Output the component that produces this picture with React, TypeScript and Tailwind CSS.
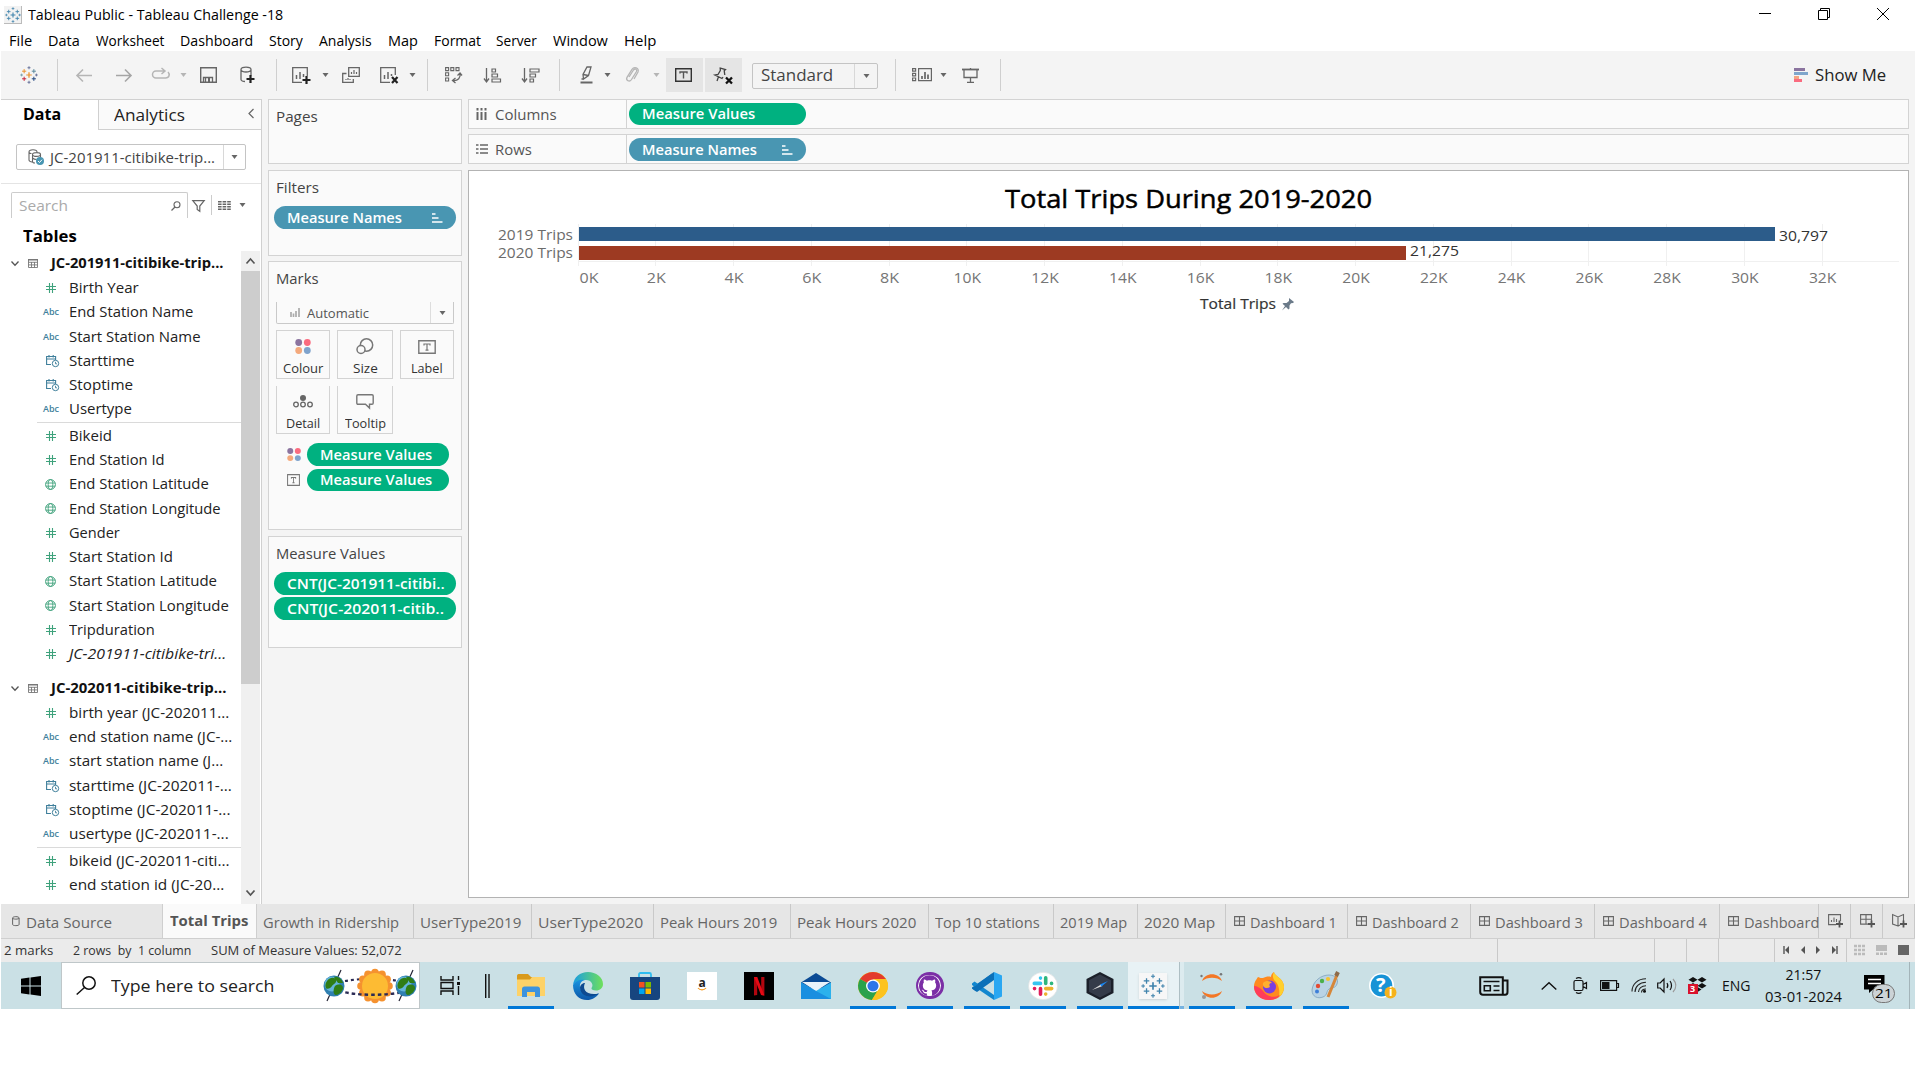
import React, { useLayoutEffect, useRef, useState } from "react";
import { SiGithub } from "react-icons/si";

/* Label stretched horizontally so that it fills exactly `w` pixels. */
function Fit({ w, className = "", children }: { w: number; className?: string; children: string }) {
  const ref = useRef<HTMLSpanElement>(null);
  const [k, setK] = useState(1);
  useLayoutEffect(() => {
    const n = ref.current;
    if (n && n.offsetWidth) setK(w / n.offsetWidth);
  }, [w, children]);
  return (
    <span className={"block shrink-0 whitespace-pre " + className} style={{ width: w }}>
      <span ref={ref} className="inline-block origin-left" style={{ transform: `scaleX(${k})` }}>
        {children}
      </span>
    </span>
  );
}

type SvgProps = { w: number; h: number; children: React.ReactNode; className?: string };
function Svg({ w, h, children, className = "" }: SvgProps) {
  return (
    <svg width={w} height={h} viewBox={`0 0 ${w} ${h}`} fill="none" className={"block shrink-0 overflow-visible " + className}>
      {children}
    </svg>
  );
}

const Caret = ({ c = "#666" }: { c?: string }) => (
  <Svg w={7} h={4}>
    <path d="M0.5 0h6L3.5 4z" fill={c} />
  </Svg>
);

const plus = (x: number, y: number, r: number) => `M${x - r} ${y}h${r * 2}M${x} ${y - r}v${r * 2}`;

function TableauMark({ size, mono = false }: { size: number; mono?: boolean }) {
  const c = mono ? "#3f83ac" : "";
  return (
    <svg width={size} height={size} viewBox="0 0 26 26" fill="none" className="block shrink-0">
      <path d={plus(13, 13, 4)} stroke={c || "#eb912c"} strokeWidth="1.8" />
      <path d={plus(6, 7.5, 3)} stroke={c || "#eb912c"} strokeWidth="1.4" />
      <path d={plus(20, 7.5, 3)} stroke={c || "#59879b"} strokeWidth="1.4" />
      <path d={plus(6, 18.5, 3)} stroke={c || "#c72035"} strokeWidth="1.4" />
      <path d={plus(20, 18.5, 3)} stroke={c || "#1f447e"} strokeWidth="1.4" />
      <path d={plus(13, 2.5, 2.2)} stroke={c || "#5b6591"} strokeWidth="1.2" />
      <path d={plus(13, 23.5, 2.2)} stroke={c || "#5b6591"} strokeWidth="1.2" />
      <path d={plus(2.3, 13, 2)} stroke={c || "#7199a6"} strokeWidth="1.2" />
      <path d={plus(23.7, 13, 2)} stroke={c || "#5b6591"} strokeWidth="1.2" />
    </svg>
  );
}

function SortMark() {
  return (
    <Svg w={11} h={10}>
      <path d="M0 1h3.5M0 5h6.5M0 9h10.5" stroke="#fff" strokeWidth="1.6" />
    </Svg>
  );
}

/* ---------- window chrome ---------- */

const menus: [string, number, string][] = [
  ["File", 23, "w-[39px]"],
  ["Data", 32, "w-[48px]"],
  ["Worksheet", 68, "w-[84px]"],
  ["Dashboard", 73, "w-[89px]"],
  ["Story", 34, "w-[50px]"],
  ["Analysis", 53, "w-[69px]"],
  ["Map", 30, "w-[46px]"],
  ["Format", 47, "w-[62px]"],
  ["Server", 41, "w-[57px]"],
  ["Window", 55, "w-[71px]"],
  ["Help", 32, "w-[40px]"],
];

function TitleBar() {
  return (
    <div className="flex h-7 items-center pl-1 text-black">
      <div className="mt-0.5 flex h-[18px] w-[18px] items-center justify-center border-r border-b border-[#bbb] bg-[#f2f2f2]">
        <TableauMark size={16} mono />
      </div>
      <Fit w={255} className="ml-[6px] mt-px text-[14.5px] leading-7">Tableau Public - Tableau Challenge -18</Fit>
      <div className="mr-[26px] ml-auto flex items-center gap-[47px]">
        <Svg w={12} h={12}><path d="M0 5.5h12" stroke="#000" /></Svg>
        <Svg w={12} h={12}><path d="M.5 2.5h9v9h-9zM2.5 2.5v-2h9v9h-2" stroke="#000" /></Svg>
        <Svg w={12} h={12}><path d="M0 0L12 12M12 0L0 12" stroke="#000" /></Svg>
      </div>
    </div>
  );
}

function MenuBar() {
  return (
    <div className="flex h-[23px] pl-[9px] text-black">
      {menus.map(([t, w, cls]) => (
        <div key={t} className={"shrink-0 " + cls}>
          <Fit w={w} className="text-[14px] leading-[25px]">{t}</Fit>
        </div>
      ))}
    </div>
  );
}

const Sep = () => <div className="h-8 w-px shrink-0 bg-[#cfcfcf]" />;

function Cell({ cls, children }: { cls: string; children: React.ReactNode }) {
  return <div className={"flex h-[34px] shrink-0 items-center justify-center " + cls}>{children}</div>;
}

const g = "#666";
const lg = "#b5b5b5";

function Toolbar() {
  return (
    <div className="ml-px flex h-12 items-center bg-[#f4f4f4]">
      <Cell cls="w-[55px]"><TableauMark size={18} /></Cell>
      <div className="ml-px"><Sep /></div>
      <Cell cls="ml-[6px] w-10"><Svg w={16} h={13}><path d="M16 6.5H1M7 .5L1 6.500l6 6" stroke={lg} strokeWidth="1.6" /></Svg></Cell>
      <Cell cls="w-[39px]"><Svg w={16} h={13}><path d="M0 6.500h15M9 .5l6 6-6 6" stroke="#a5a5a5" strokeWidth="1.6" /></Svg></Cell>
      <Cell cls="w-9 pb-1"><Svg w={18} h={11}><path d="M12 3H4a3.300 3.300 0 000 7h9.500c4 0 4.500-4 2.500-6M9.500 0l3.500 3-3.500 3" stroke={lg} strokeWidth="1.5" /></Svg></Cell>
      <Cell cls="w-[9px]"><Caret c={lg} /></Cell>
      <Cell cls="ml-[2px] w-[36px]"><Svg w={17} h={16}><path d="M.7.7h15.600v14.600H.7z" stroke={g} strokeWidth="1.400" /><path d="M3.500 15v-4.500h9V15M5.500 11v4" stroke={g} strokeWidth="1.300" /><path d="M8 11h2v4H8z" fill={g} /></Svg></Cell>
      <Cell cls="w-[42px]"><Svg w={15} h={18}><path d="M1 3.500v10c0 1 2 2 4 2M1 3.500C1 .2 11 .2 11 3.500S1 6.800 1 3.500M11 3.500v6" stroke={g} strokeWidth="1.300" /><path d={plus(10.5, 13, 4)} stroke="#222" strokeWidth="2.200" /></Svg></Cell>
      <div className="ml-[8px]"><Sep /></div>
      <Cell cls="ml-[3px] w-[42px]"><Svg w={19} h={17}><path d="M15.300 9V.7H.7v14.600H10" stroke={g} strokeWidth="1.300" /><path d="M4.500 12V8M8 12V5M11.500 10V7" stroke={g} strokeWidth="1.500" /><path d={plus(14.5, 13, 4)} stroke="#222" strokeWidth="2.200" /></Svg></Cell>
      <Cell cls="-ml-px w-[9px]"><Caret /></Cell>
      <Cell cls="ml-px w-[40px]"><Svg w={18} h={16}><path d="M6.700.7h10.600v8.600H6.700zM4.500 6.500H.7v8.800h10.600V12" stroke={g} strokeWidth="1.300" /><path d="M9.500 7V5M12 7V3M14.500 7V5M4 13v-1M6 13v-2M8 13v-1" stroke={g} strokeWidth="1.200" /></Svg></Cell>
      <Cell cls="-ml-px w-[38px]"><Svg w={19} h={17}><path d="M15.300 8V.7H.7v14.600H10" stroke={g} strokeWidth="1.300" /><path d="M4.500 12V8M8 12V5M11.500 9V7" stroke={g} strokeWidth="1.500" /><path d="M12 10l5.500 6M17.500 10L12 16" stroke="#222" strokeWidth="2.200" /></Svg></Cell>
      <Cell cls="w-[9px]"><Caret /></Cell>
      <div className="ml-[10px]"><Sep /></div>
      <Cell cls="ml-[5px] w-[40px]"><Svg w={17} h={16}><path d="M.6.6h3v3h-3zM5.800.6h3v3h-3zM11 .6h3v3h-3zM.6 5.800h3v3h-3zM.6 11h3v3h-3z" stroke={g} strokeWidth="1.100" /><path d="M15 6.500c1 4-2 7.500-7 7M12.500 8.500L15 6l2 2.500M10.500 11L7.500 13.500l3 2.500" stroke={g} strokeWidth="1.300" /></Svg></Cell>
      <Cell cls="w-[38px]"><Svg w={17} h={15}><path d="M2.500 0v13M0 10.500L2.500 14 5 10.500" stroke={g} strokeWidth="1.300" /><path d="M8 1h3.500v3H8zM8 6h5.500v3H8zM8 11h8.500v3H8z" stroke={g} strokeWidth="1.200" /></Svg></Cell>
      <Cell cls="w-[39px]"><Svg w={17} h={15}><path d="M2.500 0v13M0 10.500L2.500 14 5 10.500" stroke={g} strokeWidth="1.300" /><path d="M8 1h9v3H8zM8 6h5.500v3H8zM8 11h3.500v3H8z" stroke={g} strokeWidth="1.200" /></Svg></Cell>
      <div className="ml-[9px]"><Sep /></div>
      <Cell cls="ml-[6px] w-[40px]"><Svg w={13} h={18}><path d="M7 1h4L8.500 9.500 3.500 13l-.5-4.500zM3 8.500l5.500 1M3.500 13L1.500 13" stroke={g} strokeWidth="1.300" /><path d="M.5 16.500h12" stroke={g} strokeWidth="2" /></Svg></Cell>
      <Cell cls="-ml-[3px] w-[9px]"><Caret /></Cell>
      <Cell cls="w-[40px]"><Svg w={14} h={16}><path d="M4 10l4.500-7c1.500-2 4-.5 3 1.500l-5 8c-2 3-6 1-4.500-2.200l5-8C9-.5 14.500.5 13 5l-4 7" stroke={lg} strokeWidth="1.300" /></Svg></Cell>
      <Cell cls="w-[9px]"><Caret c={lg} /></Cell>
      <Cell cls="ml-[5px] w-[37px] bg-[#e5e5e5]"><Svg w={17} h={14} className="-ml-[2px]"><path d="M.7.7h15.600v12.600H.7z" stroke="#333" strokeWidth="1.400" /><path d="M5 5.500V4h7v1.500M8.500 4v6.500" stroke="#555" strokeWidth="1.400" /></Svg></Cell>
      <Cell cls="ml-0.5 w-[37px] bg-[#e5e5e5]">
        <Svg w={19} h={17}><path d="M5.500.8l6 1.700-1.300 1.200.6 4.300M6.300 1v2.500L4 7.500 1 8l7 3.500 1-1.500M4.500 9.800L3 14" stroke="#444" strokeWidth="1.300" /><path d="M12 10.500l6 6M18 10.500l-6 6" stroke="#111" strokeWidth="2.300" /></Svg>
      </Cell>
      <div className="mt-px ml-[10px] flex h-[26px] w-[126px] rounded-[2px] border border-[#c4c4c4]">
        <Fit w={72} className="ml-2 text-[16px] leading-[23px] text-[#444]">Standard</Fit>
        <div className="ml-auto flex w-[23px] items-center justify-center border-l border-[#d8d8d8]"><Caret /></div>
      </div>
      <div className="ml-[17px]"><Sep /></div>
      <Cell cls="ml-[5px] w-[42px]"><Svg w={20} h={14}><path d="M.6.6h3v2.600h-3zM.6 5.300h3v2.600h-3zM.6 10h3v2.600h-3zM6.600.6h12.800v12H6.600z" stroke={g} strokeWidth="1.200" /><path d="M10 11V8M13 11V4M16 11V6.500" stroke={g} strokeWidth="1.700" /></Svg></Cell>
      <Cell cls="-ml-[4px] w-[9px]"><Caret /></Cell>
      <Cell cls="ml-[2px] w-[40px]"><Svg w={17} h={15}><path d="M0 1.500h17" stroke={g} strokeWidth="1.800" /><path d="M2 2v7.500h13V2M8.500 0v2M8.500 9.500V14M5 14.300h7" stroke={g} strokeWidth="1.300" /></Svg></Cell>
      <div className="ml-[10px]"><Sep /></div>
      <div className="mr-[29px] ml-auto flex items-center gap-[7px]">
        <Svg w={14} h={14}><path d="M0 0h11v3H0z" fill="#8b749f" /><path d="M0 4h14v3H0z" fill="#7fa6cc" /><path d="M0 8h5v3H0z" fill="#f4a582" /><path d="M0 11h8v3H0z" fill="#fa6b7f" /></Svg>
        <Fit w={71} className="-mt-px text-[16px] leading-6 text-[#222]">Show Me</Fit>
      </div>
    </div>
  );
}

/* ---------- data pane ---------- */

type Kind = "num" | "abc" | "date" | "geo";
type Field = [Kind, string, number, boolean?];

const t1dims: Field[] = [
  ["num", "Birth Year", 69], ["abc", "End Station Name", 123], ["abc", "Start Station Name", 131],
  ["date", "Starttime", 65], ["date", "Stoptime", 63], ["abc", "Usertype", 62],
];
const t1meas: Field[] = [
  ["num", "Bikeid", 42], ["num", "End Station Id", 95], ["geo", "End Station Latitude", 139],
  ["geo", "End Station Longitude", 151], ["num", "Gender", 50], ["num", "Start Station Id", 103],
  ["geo", "Start Station Latitude", 147], ["geo", "Start Station Longitude", 159],
  ["num", "Tripduration", 85], ["num", "JC-201911-citibike-tri...", 156, true],
];
const t2dims: Field[] = [
  ["num", "birth year (JC-202011...", 159], ["abc", "end station name (JC-...", 162], ["abc", "start station name (J...", 153],
  ["date", "starttime (JC-202011-...", 162], ["date", "stoptime (JC-202011-...", 160], ["abc", "usertype (JC-202011-...", 159],
];
const t2meas: Field[] = [["num", "bikeid (JC-202011-citi...", 160], ["num", "end station id (JC-20...", 154]];

function KindIcon({ kind }: { kind: Kind }) {
  if (kind === "num") return <Svg w={10} h={10}><path d="M0 3.500h10M0 6.500h10M3.500 0v10M6.500 0v10" stroke="#3fa27c" strokeWidth="1.100" /></Svg>;
  if (kind === "abc") return <Fit w={16} className="text-[9px] leading-[12px] font-semibold text-[#3f7f9b]">Abc</Fit>;
  if (kind === "geo")
    return (
      <Svg w={11} h={11} className="mr-px">
        <circle cx="5.500" cy="5.500" r="4.900" stroke="#3fa27c" />
        <path d="M.9 4h9.200M.9 7.200h9.200" stroke="#3fa27c" strokeWidth=".9" />
        <ellipse cx="5.500" cy="5.500" rx="2.300" ry="4.900" stroke="#3fa27c" strokeWidth=".9" />
      </Svg>
    );
  return (
    <Svg w={13} h={12} className="ml-[3px]">
      <path d="M5 9.500H.6v-8h9V5M.6 4h9M3 0v2.500M7.200 0v2.500" stroke="#3f7f9b" strokeWidth="1.100" />
      <circle cx="9.500" cy="8.500" r="3.200" stroke="#3f7f9b" fill="#fff" />
      <path d="M9.500 6.800v2h1.500" stroke="#3f7f9b" strokeWidth=".9" />
    </Svg>
  );
}

function Fields({ list }: { list: Field[] }) {
  return (
    <>
      {list.map(([k, t, w, it]) => (
        <div key={t} className="flex h-[24.3px] items-center">
          <div className="ml-9 flex w-7 justify-center"><KindIcon kind={k} /></div>
          <Fit w={w + 1} className={"ml-1 text-[14px] leading-6 text-[#222] " + (it ? "italic" : "")}>{t}</Fit>
        </div>
      ))}
    </>
  );
}

function TableHead({ text, w }: { text: string; w: number }) {
  return (
    <div className="flex h-[24.8px] items-center">
      <Svg w={8} h={5} className="ml-[10px]"><path d="M.5.5L4 4.300 7.500.5" stroke="#555" strokeWidth="1.300" /></Svg>
      <Svg w={10} h={9} className="ml-[9px]"><path d="M.5.5h9v8h-9zM.5 3.300h9M.5 5.900h9M3.500 3v5.500M6.500 3v5.500" stroke="#777" strokeWidth=".9" /><path d="M0 0h10v1.500H0z" fill="#777" /></Svg>
      <Fit w={w} className="ml-[13px] text-[14px] leading-6 font-bold text-[#111]">{text}</Fit>
    </div>
  );
}

const Rule = () => <div className="ml-9 h-[1.9px] border-t border-[#dadada]" />;

function DataPane() {
  return (
    <div className="ml-px flex w-[261px] shrink-0 flex-col border-t border-r border-[#d0d0d0] bg-white">
      <div className="flex h-[30px] shrink-0">
        <div className="w-[97px] pl-[22px]"><Fit w={38} className="text-[16px] leading-[28px] font-bold text-black">Data</Fit></div>
        <div className="flex flex-1 items-center border-b border-l border-[#d0d0d0] bg-[#fafafa] pl-[15px]">
          <Fit w={71} className="text-[16px] leading-[28px] text-[#222]">Analytics</Fit>
          <Svg w={6} h={9} className="mr-[7px] mb-[2px] ml-auto"><path d="M5.500 0L1 4.500 5.500 9" stroke="#666" strokeWidth="1.200" /></Svg>
        </div>
      </div>
      <div className="mt-[14px] ml-[15px] flex h-[26px] w-[230px] shrink-0 items-center rounded-[2px] border border-[#c4c4c4]">
        <Svg w={16} h={16} className="ml-[11px]">
          <path d="M1 3v8c0 1 1.500 2 3 2M1 3c0-3 8-3 8 0v1M1 3c0 1 1 1.500 2.500 1.500M4.500 5.500v7c0 1 1 1.500 2.500 1.500M4.500 5.500c0-2.500 8-2.500 8 0s-8 2.500-8 0M12.500 5.500v3M4.500 9c1 1 2 1.500 4 1.500" stroke="#666" strokeWidth="1.100" />
          <circle cx="12" cy="12" r="4" fill="#4996b2" /><path d="M10 12l1.500 1.500L14 10.700" stroke="#fff" />
        </Svg>
        <Fit w={165} className="-mt-px ml-[6px] text-[15px] leading-6 text-[#444]">JC-201911-citibike-trip...</Fit>
        <div className="ml-auto flex h-full w-[22px] items-center justify-center border-l border-[#d8d8d8]"><Caret /></div>
      </div>
      <div className="mt-[13px] h-px shrink-0 bg-[#e4e4e4]" />
      <div className="mt-2 ml-[10px] flex h-[26px] shrink-0">
        <div className="flex w-[177px] items-center rounded-t-[2px] border border-b-0 border-[#ccc] pl-[7px]">
          <Fit w={49} className="text-[14.500px] leading-6 text-[#aaa]">Search</Fit>
          <Svg w={10} h={10} className="mr-[6px] ml-auto"><circle cx="6" cy="3.700" r="3" stroke="#666" strokeWidth="1.100" /><path d="M4 6L.5 9.500" stroke="#666" strokeWidth="1.200" /></Svg>
        </div>
        <Svg w={13} h={12} className="mt-2 ml-1"><path d="M.8.6h11.400L7.800 6v5.300L5.200 9.500V6z" stroke="#666" strokeWidth="1.200" /></Svg>
        <div className="mt-[3px] ml-[6px] h-5 w-px bg-[#ccc]" />
        <Svg w={13} h={9} className="mt-[9px] ml-[6px]"><path d="M0 .8h13M0 3.300h13M0 5.800h13M0 8.300h13" stroke="#666" strokeWidth="1.500" strokeDasharray="3.600 1" /></Svg>
        <div className="mt-[11px] ml-2"><Caret /></div>
      </div>
      <div className="h-[33px] shrink-0 pl-[22px]"><Fit w={54} className="pt-[6px] text-[15.500px] leading-6 font-bold text-black">Tables</Fit></div>
      <div className="flex min-h-0 flex-1">
        <div className="min-w-0 flex-1 overflow-hidden">
          <TableHead text="JC-201911-citibike-trip..." w={173} />
          <Fields list={t1dims} />
          <Rule />
          <Fields list={t1meas} />
          <div className="h-[9.500px]" />
          <TableHead text="JC-202011-citibike-trip..." w={176} />
          <Fields list={t2dims} />
          <Rule />
          <Fields list={t2meas} />
        </div>
        <div className="mr-px flex w-[19px] flex-col bg-[#f0f0f0]">
          <div className="flex h-5 items-center justify-center"><Svg w={9} h={6}><path d="M.5 5.500l4-4.500 4 4.500" stroke="#555" strokeWidth="1.600" /></Svg></div>
          <div className="h-[413px] bg-[#cdcdcd]" />
          <div className="mt-auto flex h-[22px] items-center justify-center"><Svg w={9} h={6}><path d="M.5.5l4 4.500 4-4.500" stroke="#555" strokeWidth="1.800" /></Svg></div>
        </div>
      </div>
    </div>
  );
}

/* ---------- cards ---------- */

function Card({ title, w, h, children }: { title: string; w: number; h: string; children?: React.ReactNode }) {
  return (
    <div className={"shrink-0 border border-[#d3d3d3] bg-[#fafafa] " + h}>
      <Fit w={w} className="ml-[7px] pt-[5px] text-[14.500px] leading-6 text-[#444]">{title}</Fit>
      {children}
    </div>
  );
}

function Pill({ cls, text, w, sort }: { cls: string; text: string; w: number; sort?: boolean }) {
  return (
    <div className={"flex shrink-0 items-center rounded-full pl-[13px] " + cls}>
      <Fit w={w} className="text-[13.500px] leading-[22px] font-semibold text-white">{text}</Fit>
      {sort && <div className="mr-[13px] ml-auto"><SortMark /></div>}
    </div>
  );
}

function ColourDots({ big = false }: { big?: boolean }) {
  return (
    <Svg w={big ? 16 : 14} h={big ? 15 : 13}>
      <g transform={big ? "" : "scale(.88)"}>
        <circle cx="3.700" cy="3.500" r="3.400" fill="#8b749f" /><circle cx="12.300" cy="3.500" r="3.400" fill="#fa6b7f" />
        <circle cx="3.700" cy="11.500" r="3.400" fill="#f4a97c" /><circle cx="12.300" cy="11.500" r="3.400" fill="#7fa3cc" />
      </g>
    </Svg>
  );
}

const TextBox = ({ w = 18, h = 14 }: { w?: number; h?: number }) => (
  <svg width={w} height={h} viewBox="0 0 18 14" fill="none" preserveAspectRatio="none" className="block shrink-0">
    <path d="M.8.8h16.400v12.400H.8z" stroke="#777" strokeWidth="1.400" />
    <path d="M6 5.500V4h6v1.500M9 4v6.200M7.500 10.200h3" stroke="#777" strokeWidth="1.200" />
  </svg>
);

function MarkButton({ text, w, cls, children }: { text: string; w: number; cls: string; children: React.ReactNode }) {
  return (
    <div className={"flex flex-col items-center border border-[#d3d3d3] " + cls}>
      <div className="flex h-[31px] items-center">{children}</div>
      <Fit w={w} className="-mt-[3px] text-[13px] leading-[18px] text-[#333]">{text}</Fit>
    </div>
  );
}

function Cards() {
  return (
    <div className="ml-[6px] flex w-[194px] shrink-0 flex-col">
      <Card title="Pages" w={42} h="h-[65px]" />
      <Card title="Filters" w={43} h="mt-[6px] h-[86px]">
        <Pill cls="ml-[5px] mt-[6px] h-[23px] w-[182px] bg-[#4996b2]" text="Measure Names" w={115} sort />
      </Card>
      <Card title="Marks" w={43} h="mt-[5px] h-[269px]">
        <div className="mt-[11px] ml-[7px] flex h-[22px] w-[178px] items-center rounded-b-[2px] border border-t-0 border-[#c9c9c9]">
          <Svg w={10} h={9} className="ml-[13px]"><path d="M1 9V4M3.500 9V5.500M6 9V3M9 9V0" stroke="#aaa" strokeWidth="1.700" /></Svg>
          <Fit w={62} className="ml-[7px] text-[13px] leading-[18px] text-[#555]">Automatic</Fit>
          <div className="ml-auto flex h-full w-[23px] items-center justify-center border-l border-[#ddd]"><Caret /></div>
        </div>
        <div className="mt-[6px] ml-[7px] flex h-[49px] gap-[7px]">
          <MarkButton text="Colour" w={40} cls="w-[54px]"><ColourDots big /></MarkButton>
          <MarkButton text="Size" w={25} cls="w-[56px]">
            <Svg w={18} h={17}><circle cx="10.500" cy="7" r="6.200" stroke="#777" strokeWidth="1.500" /><circle cx="5" cy="11.500" r="4" stroke="#777" strokeWidth="1.500" fill="#fafafa" /></Svg>
          </MarkButton>
          <MarkButton text="Label" w={32} cls="w-[54px]"><TextBox /></MarkButton>
        </div>
        <div className="mt-[7px] ml-[7px] flex h-[48px] gap-[7px]">
          <MarkButton text="Detail" w={34} cls="w-[54px] border-t-0">
            <Svg w={20} h={13}><circle cx="10" cy="3" r="3" fill="#666" /><circle cx="3" cy="9.500" r="2.300" stroke="#666" strokeWidth="1.300" /><circle cx="10" cy="9.500" r="2.300" stroke="#666" strokeWidth="1.300" /><circle cx="17" cy="9.500" r="2.300" stroke="#666" strokeWidth="1.300" /></Svg>
          </MarkButton>
          <MarkButton text="Tooltip" w={41} cls="w-[56px] border-t-0">
            <Svg w={18} h={15}><path d="M2 .8h14c.8 0 1.200.4 1.200 1.200v7c0 .8-.4 1.200-1.200 1.200h-2.500V14l-4-3.800H2c-.8 0-1.200-.4-1.200-1.200V2C.8 1.200 1.200.8 2 .8z" stroke="#777" strokeWidth="1.400" /></Svg>
          </MarkButton>
        </div>
        <div className="mt-[9px] ml-[18px] flex items-center gap-[6px]"><ColourDots /><Pill cls="h-[23px] w-[142px] bg-[#00b180]" text="Measure Values" w={112} /></div>
        <div className="mt-[3px] ml-[18px] flex items-center gap-[7px]"><TextBox w={13} h={12} /><Pill cls="h-[22px] w-[142px] bg-[#00b180]" text="Measure Values" w={112} /></div>
      </Card>
      <Card title="Measure Values" w={109} h="mt-[6px] h-[112px]">
        <Pill cls="ml-[5px] mt-[6px] h-[23px] w-[182px] bg-[#00b180]" text="CNT(JC-201911-citibi.." w={158} />
        <Pill cls="ml-[5px] mt-[2px] h-[23px] w-[182px] bg-[#00b180]" text="CNT(JC-202011-citib.." w={157} />
      </Card>
    </div>
  );
}

/* ---------- shelves and view ---------- */

function Shelf({ label, w, icon, h, children }: { label: string; w: number; icon: React.ReactNode; h: string; children: React.ReactNode }) {
  return (
    <div className={"flex shrink-0 border border-[#d3d3d3] bg-[#fafafa] " + h}>
      <div className="flex w-[158px] items-center border-r border-[#d3d3d3]">
        <div className="ml-[7px] w-[19px]">{icon}</div>
        <Fit w={w} className="mt-px text-[14.500px] leading-6 text-[#555]">{label}</Fit>
      </div>
      <div className="flex items-center pl-0.5">{children}</div>
    </div>
  );
}

const X0 = 578.5;
const STEP = 77.76;

function Chart() {
  return (
    <svg width={1439} height={150} viewBox="469 171 1439 150" className="block">
      {Array.from({ length: 17 }, (_, i) => (
        <path key={i} d={`M${Math.round(X0 + i * STEP) - 0.5} 224v42`} stroke="#f0f0f0" />
      ))}
      <path d="M578 261.500h1321" stroke="#f0f0f0" />
      <rect x="579" y="227" width="1196" height="14" fill="#2c5c8a" />
      <rect x="579" y="246" width="827" height="14" fill="#9d3a22" />
      <text x="1005" y="208" textLength="367" lengthAdjust="spacingAndGlyphs" fontSize="25" fill="#000" stroke="#000" strokeWidth=".45">Total Trips During 2019-2020</text>
      <g fontSize="15" fill="#6b6b6b">
        <text x="498" y="239.500" textLength="75" lengthAdjust="spacingAndGlyphs">2019 Trips</text>
        <text x="498" y="258" textLength="75" lengthAdjust="spacingAndGlyphs">2020 Trips</text>
        {Array.from({ length: 17 }, (_, i) => {
          const w = i < 5 ? 19 : 27.5;
          const cx = i === 0 ? X0 + 10.5 : X0 + i * STEP;
          return (
            <text key={i} x={cx - w / 2} y="283" textLength={w} lengthAdjust="spacingAndGlyphs" fill="#757575">{`${i * 2}K`}</text>
          );
        })}
      </g>
      <g fontSize="15" fill="#333">
        <text x="1779" y="241" textLength="49" lengthAdjust="spacingAndGlyphs">30,797</text>
        <text x="1410" y="256" textLength="49" lengthAdjust="spacingAndGlyphs">21,275</text>
        <text x="1200" y="309" textLength="76" lengthAdjust="spacingAndGlyphs" fontSize="14" stroke="#333" strokeWidth=".2">Total Trips</text>
      </g>
      <path d="M1289 298l5 4-1 1-2 .3-1.500 2.200 0 3-1 1-2.500-2.500-4 3.500 3-4.500-2.500-2.300 1-.8 3 0 2.500-1.800 0-2z" fill="#6b7a89" />
    </svg>
  );
}

function Worksheet() {
  return (
    <div className="ml-[6px] flex w-[1441px] shrink-0 flex-col">
      <Shelf label="Columns" w={62} h="h-[30px]" icon={<Svg w={12} h={12} className="-mt-px"><path d="M1.500 4v8M5.500 4v8M9.500 4v8M1.500 0v2.500M5.500 0v2.500M9.500 0v2.500" stroke="#666" strokeWidth="2" /></Svg>}>
        <Pill cls="h-[22px] w-[177px] bg-[#00b180]" text="Measure Values" w={113} />
      </Shelf>
      <Shelf label="Rows" w={37} h="mt-[5px] h-[30px]" icon={<Svg w={12} h={10}><path d="M0 1h2.500M0 5h2.500M0 9h2.500M4 1h8M4 5h8M4 9h8" stroke="#666" strokeWidth="1.600" /></Svg>}>
        <Pill cls="mt-px h-[23px] w-[177px] bg-[#4996b2]" text="Measure Names" w={115} sort />
      </Shelf>
      <div className="mt-[6px] h-[728px] border border-[#b3b3b3] bg-white"><Chart /></div>
    </div>
  );
}

/* ---------- sheet tabs and status ---------- */

const GridIcon = () => <Svg w={11} h={10}><path d="M.6.6h9.800v8.800H.6zM5.500.6v8.800M.6 5h9.800" stroke="#666" strokeWidth="1.100" /></Svg>;

const tabs: [string, number, string, boolean?][] = [
  ["Growth in Ridership", 136, "w-[157px]"],
  ["UserType2019", 101, "w-[118px]"],
  ["UserType2020", 105, "w-[122px]"],
  ["Peak Hours 2019", 117, "w-[137px]"],
  ["Peak Hours 2020", 119, "w-[138px]"],
  ["Top 10 stations", 105, "w-[125px]"],
  ["2019 Map", 67, "w-[84px]"],
  ["2020 Map", 71, "w-[88px]"],
  ["Dashboard 1", 87, "w-[122px]", true],
  ["Dashboard 2", 87, "w-[123px]", true],
  ["Dashboard 3", 88, "w-[124px]", true],
  ["Dashboard 4", 88, "w-[125px]", true],
  ["Dashboard", 75, "w-[99px]", true],
];

function SheetTabs() {
  return (
    <div className="ml-px flex h-[35px] border-b border-[#cfcfcf] bg-[#e6e6e6]">
      <div className="flex w-[161px] shrink-0 items-center pl-[11px]">
        <Svg w={8} h={10} className="-mt-px"><path d="M.6 2v6.500c0 1.500 6.500 1.500 6.500 0V2c0-1.800-6.500-1.800-6.500 0zm0 0c0 1.500 6.500 1.500 6.500 0" stroke="#666" /></Svg>
        <Fit w={86} className="ml-[6px] mt-px text-[15px] leading-6 text-[#666]">Data Source</Fit>
      </div>
      <div className="flex w-[95px] shrink-0 items-center border-x border-[#cfcfcf] bg-[#fafafa] pl-[7px]">
        <Fit w={78} className="-mt-px text-[14.500px] leading-6 font-bold text-[#555]">Total Trips</Fit>
      </div>
      {tabs.map(([t, w, cls, dash]) => (
        <div key={t} className={"flex shrink-0 items-center border-r border-[#c9c9c9] " + cls}>
          {dash && <div className="mr-[5px] mb-px ml-2"><GridIcon /></div>}
          <Fit w={w} className={"mt-px text-[15px] leading-6 text-[#666] " + (dash ? "" : "ml-[6px]")}>{t}</Fit>
        </div>
      ))}
      <Cell cls="w-8 border-r border-[#c9c9c9]"><Svg w={15} h={14} className="ml-px"><path d="M12.500 7V.6H.6v10H8M3.500 8V6M6 8V3.500M8.500 8V5" stroke="#666" strokeWidth="1.100" /><path d={plus(11.5, 10, 3.5)} stroke="#555" strokeWidth="1.800" /></Svg></Cell>
      <Cell cls="w-8 border-r border-[#c9c9c9]"><Svg w={15} h={14} className="ml-px"><path d="M11.500 7V.6H.6v9.500H8M6 .6v9.500M.6 5.300h10.900" stroke="#666" strokeWidth="1.100" /><path d={plus(11.5, 10, 3.5)} stroke="#555" strokeWidth="1.800" /></Svg></Cell>
      <Cell cls="w-8 border-r border-[#c9c9c9]"><Svg w={15} h={14} className="ml-px"><path d="M11.500 7V.6L6 3 .6.6v9.500L6 12V3M6 12l2-1" stroke="#666" strokeWidth="1.100" /><path d={plus(11.5, 10, 3.5)} stroke="#555" strokeWidth="1.800" /></Svg></Cell>
    </div>
  );
}

function StatusBar() {
  const t = "text-[13px] leading-[22px] text-[#333]";
  return (
    <div className="ml-px flex h-[23px] bg-[#ebebeb]">
      <Fit w={49} className={"ml-[3px] " + t}>2 marks</Fit>
      <Fit w={118} className={"ml-5 " + t}>2 rows  by  1 column</Fit>
      <Fit w={191} className={"ml-5 " + t}>SUM of Measure Values: 52,072</Fit>
      <div className="ml-auto flex">
        <div className="w-[157px] border-l border-[#c9c9c9]" />
        <div className="w-8 border-l border-[#c9c9c9]" />
        <div className="w-8 border-l border-[#c9c9c9]" />
        <div className="w-[56px] border-l border-[#c9c9c9]" />
        <div className="flex w-[72px] items-center justify-around border-l border-[#c9c9c9] px-[2px] pb-[2px]">
          <Svg w={6} h={8}><path d="M1 0v8" stroke="#555" strokeWidth="1.400" /><path d="M6 0v8L2 4z" fill="#555" /></Svg>
          <Svg w={4} h={8}><path d="M4 0v8L0 4z" fill="#555" /></Svg>
          <Svg w={4} h={8}><path d="M0 0v8l4-4z" fill="#555" /></Svg>
          <Svg w={6} h={8}><path d="M5 0v8" stroke="#555" strokeWidth="1.400" /><path d="M0 0v8l4-4z" fill="#555" /></Svg>
        </div>
        <div className="flex w-[69px] items-start gap-[11px] border-l border-[#c9c9c9] pt-[6px] pl-[7px]">
          <Svg w={11} h={10}><path d="M0 1h11M0 5h11M0 9h11" stroke="#bbb" strokeWidth="2.600" strokeDasharray="3 1" /></Svg>
          <Svg w={11} h={10}><path d="M0 0h11v6H0z" fill="#bbb" /><path d="M0 8.700h11" stroke="#bbb" strokeWidth="2.600" strokeDasharray="3 1" /></Svg>
          <Svg w={11} h={10}><path d="M0 0h11v10H0z" fill="#666" /></Svg>
        </div>
      </div>
    </div>
  );
}

/* ---------- taskbar ---------- */

function Globe({ x }: { x: number }) {
  return (
    <g transform={`translate(${x} 17)`}>
      <path d="M7-16L-7 15" stroke="#223" strokeWidth="1.200" />
      <circle r="10.500" fill="#2f7fb0" />
      <circle cx="-2" cy="-2" r="7.500" fill="#63b4da" />
      <path d="M-7-5c3-4 8-4 9-1s-3 4-4 6-5 4-6 2-1-4 1-7zM1 0c4-3 8-1 8 2s-4 7-7 7-3-6-1-9zM0-9c4-1 8 2 9 6l-5 0z" fill="#2f7d16" />
    </g>
  );
}

function SearchArt() {
  return (
    <Svg w={95} h={34}>
      <path d="M22 12c18-3 38-3 54 0" stroke="#2b2b55" strokeWidth="2.200" strokeDasharray="3 3" />
      {Array.from({ length: 12 }, (_, i) => {
        const a = (i * Math.PI) / 6;
        return <circle key={i} cx={52 + 14 * Math.cos(a)} cy={17 + 13.5 * Math.sin(a)} r="3.800" fill="#f5922f" />;
      })}
      <circle cx="52" cy="17" r="15" fill="#f5922f" />
      <circle cx="52" cy="17" r="13" fill="#fdbb33" />
      <path d="M16 22c18 5 50 5 68 0" stroke="#2b2b55" strokeWidth="2.400" strokeDasharray="3.500 3" />
      <Globe x={11} />
      <Globe x={83} />
    </Svg>
  );
}

function TaskApp({ line = false, children }: { line?: boolean; children: React.ReactNode }) {
  return (
    <div className="flex w-[56.900px] shrink-0 flex-col items-center">
      <div className="flex h-11 items-center justify-center pt-[3px]">{children}</div>
      <div className={"h-[3px] w-[46px] " + (line ? "bg-[#0078d7]" : "")} />
    </div>
  );
}

function Taskbar() {
  return (
    <div className="ml-px flex h-[47px] bg-[#cae0e5]">
      <div className="flex w-[60px] items-center justify-center">
        <Svg w={20} h={20}><path d="M0 2.800l8.500-1.200v8H0zM9.500 1.400L20 0v9.600H9.500zM0 10.500h8.500v8L0 17.300zM9.500 10.500H20V20L9.500 18.600z" fill="#000" /></Svg>
      </div>
      <div className="flex w-[359px] shrink-0 items-center border border-[#bfc7c9] bg-white pl-[14px]">
        <Svg w={20} h={19}><circle cx="13" cy="7" r="6.200" stroke="#111" strokeWidth="1.500" /><path d="M8.500 11.500L.7 18.500" stroke="#111" strokeWidth="1.500" /></Svg>
        <Fit w={163} className="ml-[15px] text-[17px] leading-6 text-[#222]">Type here to search</Fit>
        <div className="mr-[1px] ml-auto"><SearchArt /></div>
      </div>
      <div className="flex w-[60px] items-center justify-center">
        <Svg w={21} h={19}><path d="M1 0v4h12V0M1 19v-4h12v4M1 6.500h12v6H1zM18.500 0v4M18.500 10v9" stroke="#111" strokeWidth="1.400" /><path d="M17 6h3v3h-3z" fill="#111" /></Svg>
      </div>
      <div className="flex w-[23px] items-center pl-[5px]"><Svg w={5} h={24}><path d="M.7 0v24M4 0v24" stroke="#111" strokeWidth="1.400" /></Svg></div>
      <TaskApp line>
        <Svg w={28} h={23} className="-mt-px"><path d="M0 2c0-1 .5-2 1.500-2H11l3 3h12.500c.8 0 1.500.6 1.500 1.500V8H0z" fill="#d99a1c" /><path d="M0 5.500h13l2-2.500h13v19H0z" fill="#fdd268" /><path d="M5 23V15c0-1.500 1-2.500 2.500-2.500h13c1.500 0 2.500 1 2.500 2.500v8h-5v-5h-8v5z" fill="#3c93de" /></Svg>
      </TaskApp>
      <TaskApp>
        <svg width="30" height="28" viewBox="0 0 30 28" className="block">
          <defs>
            <linearGradient id="edgeA" x1="0" y1="0" x2="1" y2="0"><stop offset="0" stopColor="#1b9de2" /><stop offset="1" stopColor="#6fe05a" /></linearGradient>
            <linearGradient id="edgeB" x1="0" y1="0" x2="0" y2="1"><stop offset="0" stopColor="#1a94e0" /><stop offset="1" stopColor="#0c56a8" /></linearGradient>
          </defs>
          <path d="M0 13C1 5 7 0 15 0c8 0 15 5 15 12 0 4-3 6.500-7 6.500-3 0-5-1-4.500-2.500 2.500-3 0-8-5.500-8C7 8 2 10 0 13z" fill="url(#edgeA)" />
          <path d="M0 13c2-4 7-6 12-5-4 1-5.500 4-5 7 .5 6 8 9.500 19 6.500-3 4-7 6.500-12 6.500C6 28 0 22 0 13z" fill="url(#edgeB)" />
          <path d="M12 11c-3 6 1 13 14 10.500C20 26 8 26 7 16c0-2.500 2-5 5-5z" fill="#0d4a91" />
        </svg>
      </TaskApp>
      <TaskApp>
        <Svg w={30} h={28}><path d="M9 6V2.500C9 1.500 9.500 1 10.500 1h9c1 0 1.500.5 1.500 1.500V6" stroke="#30bdf0" strokeWidth="1.800" /><path d="M0 5h30v20c0 2-1 3-3 3H3c-2 0-3-1-3-3z" fill="#17457f" /><path d="M9 10h5.500v5.500H9z" fill="#f25022" /><path d="M15.500 10H21v5.500h-5.500z" fill="#7fba00" /><path d="M9 16.500h5.500V22H9z" fill="#00a4ef" /><path d="M15.500 16.500H21V22h-5.500z" fill="#ffb900" /></Svg>
      </TaskApp>
      <TaskApp>
        <div className="flex h-7 w-[30px] flex-col items-center bg-white">
          <span className="text-[12px] leading-[22px] font-bold text-[#222]">a</span>
          <Svg w={8} h={3} className="-mt-[6px]"><path d="M0 0c2 2.500 6 2.500 8 0" stroke="#f79a1c" strokeWidth="1.200" /></Svg>
        </div>
      </TaskApp>
      <TaskApp>
        <Svg w={30} h={28}><path d="M0 0h30v28H0z" fill="#000" /><path d="M10 5h3.200v18l-3.200.5zM17.200 5h3.200v18.500l-3.200-.5z" fill="#b1060f" /><path d="M10 5h3.200l7.200 18.500-3.400-.5z" fill="#e50914" /></Svg>
      </TaskApp>
      <TaskApp>
        <Svg w={30} h={26}><path d="M0 9.500L15 0l15 9.500v6H0z" fill="#0a4a94" /><path d="M1 9h28L15 18z" fill="#e8f2fa" /><path d="M0 9.500l15 8.500 15-8.500V26H0z" fill="#2cb1ec" /><path d="M0 26V9.500L15 18l15 8z" fill="#1a8fe0" /></Svg>
      </TaskApp>
      <TaskApp line>
        <Svg w={30} h={28}>
          <g transform="scale(1.07 1)">
            <circle cx="14" cy="14" r="14" fill="#fcc31e" />
            <path d="M14 14L1.900 7A14 14 0 0126.100 7z" fill="#e33b2e" /><path d="M1.900 7A14 14 0 0013 28l6-11-5-3z" fill="#2ba24c" /><path d="M14 7h12.100A14 14 0 0113 28l7-11z" fill="#fcc31e" />
            <circle cx="14" cy="14" r="6.500" fill="#fff" /><circle cx="14" cy="14" r="5.200" fill="#2f76e8" />
          </g>
        </Svg>
      </TaskApp>
      <TaskApp line>
        <div className="flex h-[27px] w-[28px] items-center justify-center rounded-full bg-[#7b2fa6]">
          <div className="flex h-[21px] w-[23px] items-center justify-center rounded-full bg-white"><SiGithub size={21} color="#7b2fa6" /></div>
        </div>
      </TaskApp>
      <TaskApp line>
        <Svg w={30} h={28}><path d="M22 0L6.500 15 2.500 18 0 16.500v-1L22 0z" fill="#0b70b8" /><path d="M0 11.500L2.500 9.500 22 23v5L0 13z" fill="#1287cf" /><path d="M22 0v8L5 20l-2.500-1.500L0 16.500z" fill="#0b70b8" /><path d="M22 0l8 3.500v21L22 28z" fill="#2aa7f2" /></Svg>
      </TaskApp>
      <TaskApp line>
        <Svg w={30} h={28}>
          <ellipse cx="15" cy="14" rx="14.500" ry="13.700" fill="#fff" stroke="#ddd" strokeWidth=".6" />
          <g strokeWidth="3.600" strokeLinecap="round">
            <path d="M12.500 6v.1M6.300 11.400h6.200" stroke="#36c5f0" /><path d="M17.700 5.700v5.700M23.500 11.400h.1" stroke="#2eb67d" />
            <path d="M17.700 16.600h6M17.700 22v.1" stroke="#ecb22e" /><path d="M12.500 16.600v5.700M6.500 16.600h.1" stroke="#e01e5a" />
          </g>
        </Svg>
      </TaskApp>
      <TaskApp line>
        <Svg w={28} h={28}><path d="M14 0l13.500 7v14L14 28 .5 21V7z" fill="#1b202a" /><path d="M14 2.500L25 8.300v11.400L14 25.500 3 19.700V8.300z" fill="#343b49" /><path d="M6 18l9-5.500 1.500 1.500z" fill="#ddd" /><path d="M14 12.500L22 9l-6.500 5.500z" fill="#1a86f0" /></Svg>
      </TaskApp>
      <div className="-ml-px flex w-[56px] shrink-0">
        <div className="w-[52px] border-r border-[#aebfc4]">
          <div className="flex h-11 items-center justify-center bg-[#e8f2f5] pt-[3px]">
            <div className="flex h-[26px] w-7 items-center justify-center bg-[#f7f7f7] shadow"><TableauMark size={24} mono /></div>
          </div>
          <div className="h-[3px] bg-[#0078d7]" />
        </div>
        <div className="w-1">
          <div className="h-11 bg-[#dcebef]" />
          <div className="h-[3px] bg-[#76b3e0]" />
        </div>
      </div>
      <TaskApp line>
        <Svg w={24} h={26}><path d="M2 8C5-1 19-1 22 8 17 3.500 7 3.500 2 8zM2 18c3 9 17 9 20 0-5 4.500-15 4.500-20 0z" fill="#f37726" /><circle cx="1.500" cy="3" r="1.200" fill="#767677" /><circle cx="21" cy="1.300" r="1.300" fill="#767677" /><circle cx="4" cy="24" r="2" fill="#989798" /></Svg>
      </TaskApp>
      <TaskApp line>
        <Svg w={30} h={28}>
          <path d="M4 5c2 1 3 1 5 1 2-1 6-2 8-1 0-2 1-4 3-5 0 4 10 6 10 15S23 28 15 28 0 22 0 15C0 10 2 8 4 5z" fill="#ff8a1e" />
          <path d="M20 0c0 4 10 6 10 15 0 4-2 8-5 10 1-6 0-12-4-16-2-2-3-6-1-9z" fill="#ffd02e" />
          <path d="M0 14c0 8 6 14 15 14 5 0 9-2 11-5-7 4-14 1-17-4-2-3-6-5-9-5z" fill="#ff3d5a" />
          <circle cx="15.500" cy="15" r="6.500" fill="#7a3fe0" /><path d="M9 11c3-3 8-2 9 0-3 0-3 2-2 4-3 2-8 1-7-4z" fill="#ffb02e" />
        </Svg>
      </TaskApp>
      <TaskApp line>
        <Svg w={30} h={27}><path d="M1 18C2 9 10 3 18 3c6 0 10 4 8 9s-5 3-8 5-1 6-6 8S1 25 1 18z" fill="#b9d3e4" stroke="#7fa3bd" strokeWidth=".8" /><circle cx="7" cy="14" r="2.200" fill="#e34b33" /><circle cx="11" cy="9" r="2.200" fill="#4bb04b" /><circle cx="17" cy="7" r="2.100" fill="#f4c430" /><circle cx="6" cy="19.500" r="2" fill="#3d7fd8" /><path d="M26 3L17 25" stroke="#d6873a" strokeWidth="3" /><path d="M25 4l2-4" stroke="#8d6a4a" strokeWidth="4" /></Svg>
      </TaskApp>
      <TaskApp>
        <Svg w={28} h={26}><ellipse cx="12.500" cy="12.500" rx="12.500" ry="12.500" fill="#fff" /><ellipse cx="12.500" cy="12.500" rx="10.800" ry="11" fill="#1793d6" /><circle cx="21.500" cy="19.500" r="6" fill="#f6b21b" /></Svg>
        <div className="relative w-0">
          <span className="absolute -top-[13px] -left-[21px] text-[20px] leading-6 font-bold text-white">?</span>
          <span className="absolute -top-[2px] -left-[8px] text-[12px] leading-4 font-bold text-white">i</span>
        </div>
      </TaskApp>
      <div className="mr-[5px] ml-auto flex items-center">
        <Svg w={30} h={20} className="mr-[32px]"><path d="M1.200 1.200h22.600v17.600H4c-1.800 0-2.800-1-2.800-2.800zM24 4.500h4.500V16c0 1.800-1 2.800-2.300 2.800H22" stroke="#111" strokeWidth="2" /><path d="M4.500 5.500h16M14.500 10h6M14.500 14.500h6" stroke="#111" strokeWidth="1.700" /><path d="M5.300 9.800h6v5h-6z" stroke="#111" strokeWidth="1.600" /></Svg>
        <Svg w={16} h={8} className="mr-[16px]"><path d="M.7 7.500L8 .8l7.300 6.700" stroke="#111" strokeWidth="1.400" /></Svg>
        <Svg w={14} h={17} className="mr-[13px]"><path d="M1 5c0-1 .5-1.500 1.500-1.500h6C9.500 3.500 10 4 10 5v7c0 1-.5 1.500-1.500 1.500h-6C1.500 13.500 1 13 1 12zM10 7.500l3.500-2v6l-3.500-2M3 1.500c1.500-1 4-1 5.500 0M3 15.500c1.500 1 4 1 5.500 0" stroke="#111" strokeWidth="1.200" /></Svg>
        <Svg w={19} h={11} className="mr-[12px]"><path d="M.6.6h16v9.800H.6zM17 3.500h1.500v4H17" stroke="#111" strokeWidth="1.200" /><path d="M2 2h7.500v7H2z" fill="#111" /></Svg>
        <Svg w={16} h={15} className="mr-[10px]"><path d="M1 13.500C1 6 7 .8 15 .8M4 14c0-5.500 4.500-9.700 11-9.700M7.500 14c0-3.500 3-6.200 7.500-6.200M10.500 14.500c0-2 1.800-3.500 4.500-3.500" stroke="#222" strokeWidth="1.100" /><circle cx="13.500" cy="13.200" r="1.500" fill="#111" /></Svg>
        <Svg w={21} h={15} className="mr-[10px]"><path d="M.7 5h2.500L7 1v13l-3.800-4H.7z" stroke="#111" strokeWidth="1.200" /><path d="M10 5c1 1.500 1 3.500 0 5M13 3c2 2.500 2 6.500 0 9" stroke="#111" strokeWidth="1.200" /><path d="M16 1c3.500 4 3.500 9 0 13" stroke="#999" strokeWidth="1.200" /></Svg>
        <div className="relative mr-[15px]">
          <Svg w={19} h={17}><path d="M5 0l4.500 2.800L5 5.600.5 2.800zM14 0l4.500 2.800L14 5.600 9.500 2.800zM5 6l4.500 2.800L5 11.600.5 8.800zM14 6l4.500 2.800L14 11.600 9.500 8.800zM9.500 10l4 2.500-4 2.500z" fill="#111" /><path d="M0 7h10v10H0z" fill="#d9122c" /></Svg>
          <span className="absolute top-[7px] left-[2px] text-[9px] leading-[10px] font-bold text-white">3</span>
        </div>
        <Fit w={29} className="mr-[14px] text-[14px] leading-5 text-[#111]">ENG</Fit>
        <div className="mr-[22px] flex flex-col items-center pb-px">
          <Fit w={36} className="text-[14px] leading-[22px] text-[#111]">21:57</Fit>
          <Fit w={77} className="text-[14px] leading-[21px] text-[#111]">03-01-2024</Fit>
        </div>
        <div className="relative mr-[13px] h-[30px] w-[32px]">
          <Svg w={21} h={18} className="mt-[4px]"><path d="M0 0h20.500v14.500H9L5 18v-3.500H0z" fill="#000" /><path d="M4 4.500h13M4 8.500h13" stroke="#fff" strokeWidth="1.300" /></Svg>
          <div className="absolute top-[13px] left-[8px] flex h-[19px] w-[23px] items-center justify-center rounded-full border border-[#777] bg-[#ccd3d6]">
            <Fit w={17} className="text-[13.500px] leading-4 text-black">21</Fit>
          </div>
        </div>
        <div className="h-[47px] w-px bg-[#a3b4b9]" />
      </div>
    </div>
  );
}

export default function App() {
  return (
    <div className="h-[1080px] w-[1920px] overflow-hidden bg-white font-['Open_Sans','Noto_Sans',sans-serif]">
      <div className="flex w-[1915px] flex-col">
        <TitleBar />
        <MenuBar />
        <Toolbar />
        <div className="flex h-[805px] bg-[linear-gradient(to_right,#fff_1px,#f4f4f4_1px)]">
          <DataPane />
          <Cards />
          <Worksheet />
        </div>
        <SheetTabs />
        <StatusBar />
        <Taskbar />
      </div>
    </div>
  );
}
